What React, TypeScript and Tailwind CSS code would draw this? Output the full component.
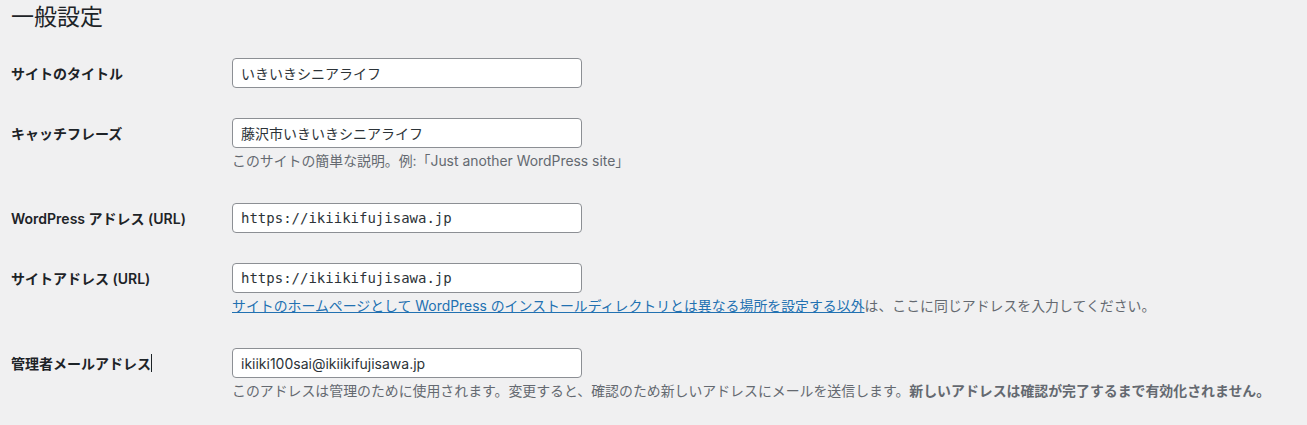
import React from "react";

const sans = '"Inter", "Noto Sans CJK JP", sans-serif';
const mono = '"DejaVu Sans Mono", "Noto Sans CJK JP", monospace';

function Field({ value, monoFont }: { value: string; monoFont?: boolean }) {
  return (
    <input
      readOnly
      value={value}
      className="block w-[350px] h-[30px] px-[8px] border border-[#8c8f94] rounded-[4px] bg-white text-[14px] text-[#2c3338] outline-none"
      style={{ fontFamily: monoFont ? mono : sans }}
    />
  );
}

function Row({
  label,
  children,
}: {
  label: React.ReactNode;
  children: React.ReactNode;
}) {
  return (
    <div className="flex py-[15px]">
      <div className="w-[221px] shrink-0 h-[30px] flex items-center text-[14px] font-semibold text-[#1d2327]">
        {label}
      </div>
      <div className="flex flex-col">{children}</div>
    </div>
  );
}

function Desc({ children }: { children: React.ReactNode }) {
  return (
    <p className="mt-[3px] mb-[2px] h-[20px] leading-[20px] text-[13.9px] text-[#646970] whitespace-nowrap">
      {children}
    </p>
  );
}

export default function App() {
  return (
    <div
      className="w-[1307px] h-[425px] bg-[#f0f0f1] pl-[11px] overflow-hidden"
      style={{ fontFamily: sans }}
    >
      <h1 className="text-[23px] leading-[30px] pt-[2px] font-normal text-[#1d2327] h-[43px]">
        一般設定
      </h1>
      <Row label="サイトのタイトル">
        <Field value="いきいきシニアライフ" />
      </Row>
      <Row label="キャッチフレーズ">
        <Field value="藤沢市いきいきシニアライフ" />
        <Desc>このサイトの簡単な説明。例:「Just another WordPress site」</Desc>
      </Row>
      <Row label="WordPress アドレス (URL)">
        <Field value="https://ikiikifujisawa.jp" monoFont />
      </Row>
      <Row label="サイトアドレス (URL)">
        <Field value="https://ikiikifujisawa.jp" monoFont />
        <Desc>
          <a href="#" className="text-[#2271b1] underline">
            サイトのホームページとして WordPress のインストールディレクトリとは異なる場所を設定する以外
          </a>
          は、ここに同じアドレスを入力してください。
        </Desc>
      </Row>
      <Row
        label={
          <span className="flex items-center">
            管理者メールアドレス
            <span className="inline-block w-[1px] h-[18px] bg-[#1d2327]" />
          </span>
        }
      >
        <Field value="ikiiki100sai@ikiikifujisawa.jp" />
        <Desc>
          このアドレスは管理のために使用されます。変更すると、確認のため新しいアドレスにメールを送信します。
          <strong className="font-semibold">新しいアドレスは確認が完了するまで有効化されません。</strong>
        </Desc>
      </Row>
    </div>
  );
}
